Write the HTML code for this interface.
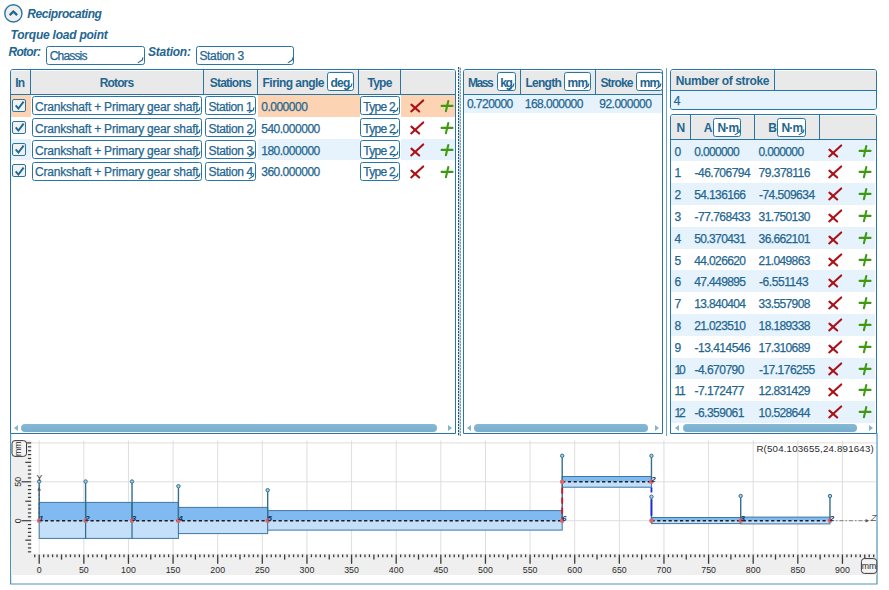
<!DOCTYPE html>
<html><head><meta charset="utf-8"><title>Reciprocating</title>
<style>
html,body{margin:0;padding:0;background:#fff;}
body{width:889px;height:590px;position:relative;overflow:hidden;font-family:"Liberation Sans",sans-serif;color:#1f6690;}
div,svg{position:absolute;box-sizing:border-box;}
.t{height:16px;line-height:16px;font-size:12px;white-space:nowrap;color:#1f6690;}
.t{-webkit-text-stroke:0.25px #1f6690;}
.bi{font-weight:bold;font-style:italic;-webkit-text-stroke:0;}
.hb{font-weight:bold;-webkit-text-stroke:0;}
.tbl{border:1.4px solid #2a76a3;border-radius:3px 3px 0 0;background:#fff;}
.hdr{background:#e9e9e9;border-radius:2px 2px 0 0;border-top:1px solid #f6fbfe;}
.vl{background:#2a76a3;}
.hl{background:#2a76a3;}
.cb{border:1.6px solid #2a76a3;border-radius:2.6px;background:#fff;}
.chk{width:13.8px;height:13px;border:1.3px solid #2a76a3;border-radius:2px;background:#f1f1f1;}
.split{background:#c2dcec;}
.spd1{width:1.4px !important;background-image:repeating-linear-gradient(to bottom,#24506e 0,#24506e 1.7px,transparent 1.7px,transparent 3px);}
.spd2{background-image:repeating-linear-gradient(to bottom,#8797a3 0,#8797a3 1.7px,transparent 1.7px,transparent 3px);}
.sbt{border-radius:4px;background:linear-gradient(to bottom,#86b8d5,#78aecd);}
svg text{font-family:"Liberation Sans",sans-serif;}
</style></head>
<body>
<svg class="ic" style="left:0px;top:0px" width="27" height="27" viewBox="0 0 27 27"><circle cx="13.4" cy="13.4" r="8.6" fill="#efefef" stroke="#2a76a3" stroke-width="1.4"/><path d="M9.7 15.1 L13.4 11.5 L17.1 15.1" fill="none" stroke="#1f6690" stroke-width="2.3"/></svg>
<div class="t bi" style="left:27.30px;top:6.00px;letter-spacing:-0.449px;">Reciprocating</div>
<div class="t bi" style="left:10.60px;top:26.80px;letter-spacing:-0.230px;">Torque load point</div>
<div class="t bi" style="left:8.40px;top:44.30px;letter-spacing:-0.678px;">Rotor:</div>
<div class="cb" style="left:46.4px;top:45.8px;width:98.30px;height:19.10px;"></div>
<svg class="ic" style="left:136.70px;top:54.90px" width="8" height="10" viewBox="-8 -10 8 10"><path d="M-2.1 -7.3 L-2.7 -5.0 L-6.8 -2.4" fill="none" stroke="#1f6690" stroke-width="1.1" stroke-linecap="round" stroke-linejoin="round"/></svg>
<div class="t" style="left:49.80px;top:48.30px;letter-spacing:-0.847px;">Chassis</div>
<div class="t bi" style="left:148.10px;top:44.30px;letter-spacing:-0.266px;">Station:</div>
<div class="cb" style="left:196.3px;top:45.8px;width:98.20px;height:19.10px;"></div>
<svg class="ic" style="left:286.50px;top:54.90px" width="8" height="10" viewBox="-8 -10 8 10"><path d="M-2.1 -7.3 L-2.7 -5.0 L-6.8 -2.4" fill="none" stroke="#1f6690" stroke-width="1.1" stroke-linecap="round" stroke-linejoin="round"/></svg>
<div class="t" style="left:199.40px;top:48.30px;letter-spacing:-0.337px;">Station 3</div>
<div class="tbl" style="left:10px;top:69.2px;width:445.8px;height:364.5px;"></div>
<div class="hdr" style="left:11px;top:70.2px;width:443.8px;height:24px;"></div>
<div class="vl" style="left:30px;top:70.2px;width:1px;height:24px;"></div>
<div class="vl" style="left:203px;top:70.2px;width:1px;height:24px;"></div>
<div class="vl" style="left:257px;top:70.2px;width:1px;height:24px;"></div>
<div class="vl" style="left:358px;top:70.2px;width:1px;height:24px;"></div>
<div class="vl" style="left:400px;top:70.2px;width:1px;height:24px;"></div>
<div class="hl" style="left:11px;top:93.6px;width:443.8px;height:1.1px;"></div>
<div class="row" style="left:11px;top:95.0px;width:20.2px;height:21.8px;background:#fcd4b4;"></div>
<div class="row" style="left:257.8px;top:95.0px;width:101.8px;height:21.8px;background:#fcd4b4;"></div>
<div class="row" style="left:401.4px;top:95.0px;width:53.4px;height:21.8px;background:#fcd4b4;"></div>
<div class="chk" style="left:12.3px;top:98.90px"></div>
<svg class="ic" style="left:12.6px;top:99.10px" width="13" height="13" viewBox="0 0 13 13"><path d="M2.7 6.4 L5.4 9.5 L10.6 2.7" fill="none" stroke="#1f6690" stroke-width="1.9"/></svg>
<div class="cb" style="left:32px;top:96.3px;width:170.30px;height:19.00px;"></div>
<svg class="ic" style="left:194.30px;top:105.30px" width="8" height="10" viewBox="-8 -10 8 10"><path d="M-2.1 -7.3 L-2.7 -5.0 L-6.8 -2.4" fill="none" stroke="#1f6690" stroke-width="1.1" stroke-linecap="round" stroke-linejoin="round"/></svg>
<div class="t" style="left:35.10px;top:98.90px;letter-spacing:-0.207px;">Crankshaft + Primary gear shaft</div>
<div class="cb" style="left:204.8px;top:96.3px;width:51.60px;height:19.00px;"></div>
<svg class="ic" style="left:248.40px;top:105.30px" width="8" height="10" viewBox="-8 -10 8 10"><path d="M-2.1 -7.3 L-2.7 -5.0 L-6.8 -2.4" fill="none" stroke="#1f6690" stroke-width="1.1" stroke-linecap="round" stroke-linejoin="round"/></svg>
<div class="t" style="left:208.50px;top:98.90px;letter-spacing:-0.412px;">Station 1</div>
<div class="t" style="left:261.20px;top:98.90px;letter-spacing:-0.482px;">0.000000</div>
<div class="cb" style="left:360.3px;top:96.3px;width:40.00px;height:19.00px;"></div>
<svg class="ic" style="left:392.30px;top:105.30px" width="8" height="10" viewBox="-8 -10 8 10"><path d="M-2.1 -7.3 L-2.7 -5.0 L-6.8 -2.4" fill="none" stroke="#1f6690" stroke-width="1.1" stroke-linecap="round" stroke-linejoin="round"/></svg>
<div class="t" style="left:363.20px;top:98.90px;letter-spacing:-0.710px;">Type 2</div>
<svg class="ic" style="left:409.10px;top:98.20px" width="16" height="16" viewBox="-8 -8 16 16"><path d="M-5.8 5.4 L6.2 -5.6" fill="none" stroke="#ab1118" stroke-width="2.1" stroke-linecap="round"/><path d="M-5.6 -1.4 L2.2 5.5" fill="none" stroke="#ab1118" stroke-width="2.1" stroke-linecap="round"/></svg>
<svg class="ic" style="left:438.90px;top:98.20px" width="16" height="16" viewBox="-8 -8 16 16"><path d="M-5.4 -0.1 L5.5 -0.1" fill="none" stroke="#3f9a12" stroke-width="2.1" stroke-linecap="round"/><path d="M1.3 -4.9 L-1.1 5.3" fill="none" stroke="#3f9a12" stroke-width="2.1" stroke-linecap="round"/></svg>
<div class="row" style="left:11px;top:116.8px;width:20.2px;height:21.8px;background:#fff;"></div>
<div class="row" style="left:257.8px;top:116.8px;width:101.8px;height:21.8px;background:#fff;"></div>
<div class="row" style="left:401.4px;top:116.8px;width:53.4px;height:21.8px;background:#fff;"></div>
<div class="chk" style="left:12.3px;top:120.70px"></div>
<svg class="ic" style="left:12.6px;top:120.90px" width="13" height="13" viewBox="0 0 13 13"><path d="M2.7 6.4 L5.4 9.5 L10.6 2.7" fill="none" stroke="#1f6690" stroke-width="1.9"/></svg>
<div class="cb" style="left:32px;top:118.1px;width:170.30px;height:19.00px;"></div>
<svg class="ic" style="left:194.30px;top:127.10px" width="8" height="10" viewBox="-8 -10 8 10"><path d="M-2.1 -7.3 L-2.7 -5.0 L-6.8 -2.4" fill="none" stroke="#1f6690" stroke-width="1.1" stroke-linecap="round" stroke-linejoin="round"/></svg>
<div class="t" style="left:35.10px;top:120.70px;letter-spacing:-0.207px;">Crankshaft + Primary gear shaft</div>
<div class="cb" style="left:204.8px;top:118.1px;width:51.60px;height:19.00px;"></div>
<svg class="ic" style="left:248.40px;top:127.10px" width="8" height="10" viewBox="-8 -10 8 10"><path d="M-2.1 -7.3 L-2.7 -5.0 L-6.8 -2.4" fill="none" stroke="#1f6690" stroke-width="1.1" stroke-linecap="round" stroke-linejoin="round"/></svg>
<div class="t" style="left:208.50px;top:120.70px;letter-spacing:-0.324px;">Station 2</div>
<div class="t" style="left:261.20px;top:120.70px;letter-spacing:-0.481px;">540.000000</div>
<div class="cb" style="left:360.3px;top:118.1px;width:40.00px;height:19.00px;"></div>
<svg class="ic" style="left:392.30px;top:127.10px" width="8" height="10" viewBox="-8 -10 8 10"><path d="M-2.1 -7.3 L-2.7 -5.0 L-6.8 -2.4" fill="none" stroke="#1f6690" stroke-width="1.1" stroke-linecap="round" stroke-linejoin="round"/></svg>
<div class="t" style="left:363.20px;top:120.70px;letter-spacing:-0.710px;">Type 2</div>
<svg class="ic" style="left:409.10px;top:120.00px" width="16" height="16" viewBox="-8 -8 16 16"><path d="M-5.8 5.4 L6.2 -5.6" fill="none" stroke="#ab1118" stroke-width="2.1" stroke-linecap="round"/><path d="M-5.6 -1.4 L2.2 5.5" fill="none" stroke="#ab1118" stroke-width="2.1" stroke-linecap="round"/></svg>
<svg class="ic" style="left:438.90px;top:120.00px" width="16" height="16" viewBox="-8 -8 16 16"><path d="M-5.4 -0.1 L5.5 -0.1" fill="none" stroke="#3f9a12" stroke-width="2.1" stroke-linecap="round"/><path d="M1.3 -4.9 L-1.1 5.3" fill="none" stroke="#3f9a12" stroke-width="2.1" stroke-linecap="round"/></svg>
<div class="row" style="left:11px;top:138.6px;width:20.2px;height:21.8px;background:#e6f2fc;"></div>
<div class="row" style="left:257.8px;top:138.6px;width:101.8px;height:21.8px;background:#e6f2fc;"></div>
<div class="row" style="left:401.4px;top:138.6px;width:53.4px;height:21.8px;background:#e6f2fc;"></div>
<div class="chk" style="left:12.3px;top:142.50px"></div>
<svg class="ic" style="left:12.6px;top:142.70px" width="13" height="13" viewBox="0 0 13 13"><path d="M2.7 6.4 L5.4 9.5 L10.6 2.7" fill="none" stroke="#1f6690" stroke-width="1.9"/></svg>
<div class="cb" style="left:32px;top:139.9px;width:170.30px;height:19.00px;"></div>
<svg class="ic" style="left:194.30px;top:148.90px" width="8" height="10" viewBox="-8 -10 8 10"><path d="M-2.1 -7.3 L-2.7 -5.0 L-6.8 -2.4" fill="none" stroke="#1f6690" stroke-width="1.1" stroke-linecap="round" stroke-linejoin="round"/></svg>
<div class="t" style="left:35.10px;top:142.50px;letter-spacing:-0.207px;">Crankshaft + Primary gear shaft</div>
<div class="cb" style="left:204.8px;top:139.9px;width:51.60px;height:19.00px;"></div>
<svg class="ic" style="left:248.40px;top:148.90px" width="8" height="10" viewBox="-8 -10 8 10"><path d="M-2.1 -7.3 L-2.7 -5.0 L-6.8 -2.4" fill="none" stroke="#1f6690" stroke-width="1.1" stroke-linecap="round" stroke-linejoin="round"/></svg>
<div class="t" style="left:208.50px;top:142.50px;letter-spacing:-0.324px;">Station 3</div>
<div class="t" style="left:261.20px;top:142.50px;letter-spacing:-0.481px;">180.000000</div>
<div class="cb" style="left:360.3px;top:139.9px;width:40.00px;height:19.00px;"></div>
<svg class="ic" style="left:392.30px;top:148.90px" width="8" height="10" viewBox="-8 -10 8 10"><path d="M-2.1 -7.3 L-2.7 -5.0 L-6.8 -2.4" fill="none" stroke="#1f6690" stroke-width="1.1" stroke-linecap="round" stroke-linejoin="round"/></svg>
<div class="t" style="left:363.20px;top:142.50px;letter-spacing:-0.710px;">Type 2</div>
<svg class="ic" style="left:409.10px;top:141.80px" width="16" height="16" viewBox="-8 -8 16 16"><path d="M-5.8 5.4 L6.2 -5.6" fill="none" stroke="#ab1118" stroke-width="2.1" stroke-linecap="round"/><path d="M-5.6 -1.4 L2.2 5.5" fill="none" stroke="#ab1118" stroke-width="2.1" stroke-linecap="round"/></svg>
<svg class="ic" style="left:438.90px;top:141.80px" width="16" height="16" viewBox="-8 -8 16 16"><path d="M-5.4 -0.1 L5.5 -0.1" fill="none" stroke="#3f9a12" stroke-width="2.1" stroke-linecap="round"/><path d="M1.3 -4.9 L-1.1 5.3" fill="none" stroke="#3f9a12" stroke-width="2.1" stroke-linecap="round"/></svg>
<div class="row" style="left:11px;top:160.39999999999998px;width:20.2px;height:21.8px;background:#fff;"></div>
<div class="row" style="left:257.8px;top:160.39999999999998px;width:101.8px;height:21.8px;background:#fff;"></div>
<div class="row" style="left:401.4px;top:160.39999999999998px;width:53.4px;height:21.8px;background:#fff;"></div>
<div class="chk" style="left:12.3px;top:164.30px"></div>
<svg class="ic" style="left:12.6px;top:164.50px" width="13" height="13" viewBox="0 0 13 13"><path d="M2.7 6.4 L5.4 9.5 L10.6 2.7" fill="none" stroke="#1f6690" stroke-width="1.9"/></svg>
<div class="cb" style="left:32px;top:161.7px;width:170.30px;height:19.00px;"></div>
<svg class="ic" style="left:194.30px;top:170.70px" width="8" height="10" viewBox="-8 -10 8 10"><path d="M-2.1 -7.3 L-2.7 -5.0 L-6.8 -2.4" fill="none" stroke="#1f6690" stroke-width="1.1" stroke-linecap="round" stroke-linejoin="round"/></svg>
<div class="t" style="left:35.10px;top:164.30px;letter-spacing:-0.207px;">Crankshaft + Primary gear shaft</div>
<div class="cb" style="left:204.8px;top:161.7px;width:51.60px;height:19.00px;"></div>
<svg class="ic" style="left:248.40px;top:170.70px" width="8" height="10" viewBox="-8 -10 8 10"><path d="M-2.1 -7.3 L-2.7 -5.0 L-6.8 -2.4" fill="none" stroke="#1f6690" stroke-width="1.1" stroke-linecap="round" stroke-linejoin="round"/></svg>
<div class="t" style="left:208.50px;top:164.30px;letter-spacing:-0.324px;">Station 4</div>
<div class="t" style="left:261.20px;top:164.30px;letter-spacing:-0.481px;">360.000000</div>
<div class="cb" style="left:360.3px;top:161.7px;width:40.00px;height:19.00px;"></div>
<svg class="ic" style="left:392.30px;top:170.70px" width="8" height="10" viewBox="-8 -10 8 10"><path d="M-2.1 -7.3 L-2.7 -5.0 L-6.8 -2.4" fill="none" stroke="#1f6690" stroke-width="1.1" stroke-linecap="round" stroke-linejoin="round"/></svg>
<div class="t" style="left:363.20px;top:164.30px;letter-spacing:-0.710px;">Type 2</div>
<svg class="ic" style="left:409.10px;top:163.60px" width="16" height="16" viewBox="-8 -8 16 16"><path d="M-5.8 5.4 L6.2 -5.6" fill="none" stroke="#ab1118" stroke-width="2.1" stroke-linecap="round"/><path d="M-5.6 -1.4 L2.2 5.5" fill="none" stroke="#ab1118" stroke-width="2.1" stroke-linecap="round"/></svg>
<svg class="ic" style="left:438.90px;top:163.60px" width="16" height="16" viewBox="-8 -8 16 16"><path d="M-5.4 -0.1 L5.5 -0.1" fill="none" stroke="#3f9a12" stroke-width="2.1" stroke-linecap="round"/><path d="M1.3 -4.9 L-1.1 5.3" fill="none" stroke="#3f9a12" stroke-width="2.1" stroke-linecap="round"/></svg>
<div class="t hb" style="left:15.30px;top:75.10px;letter-spacing:-0.834px;">In</div>
<div class="t hb" style="left:99.80px;top:75.10px;letter-spacing:-0.878px;">Rotors</div>
<div class="t hb" style="left:209.70px;top:75.10px;letter-spacing:-0.766px;">Stations</div>
<div class="t hb" style="left:262.60px;top:75.10px;letter-spacing:-0.557px;">Firing angle</div>
<div class="cb" style="left:327px;top:72.4px;width:26.60px;height:19.00px;"></div>
<svg class="ic" style="left:345.60px;top:81.40px" width="8" height="10" viewBox="-8 -10 8 10"><path d="M-2.1 -7.3 L-2.7 -5.0 L-6.8 -2.4" fill="none" stroke="#1f6690" stroke-width="1.1" stroke-linecap="round" stroke-linejoin="round"/></svg>
<div class="t hb" style="left:330.60px;top:74.80px;letter-spacing:-0.802px;">deg</div>
<div class="t hb" style="left:367.50px;top:75.10px;letter-spacing:-0.748px;">Type</div>
<div class="sbt" style="left:21px;top:424.0px;width:415.5px;height:7.9px"></div>
<svg class="ic" style="left:12px;top:424px" width="8" height="8"><path d="M6 1 L2 4 L6 7 Z" fill="#7fb4d2"/></svg>
<svg class="ic" style="left:446px;top:424px" width="8" height="8"><path d="M2 1 L6 4 L2 7 Z" fill="#7fb4d2"/></svg>
<div class="split" style="left:457.5px;top:67.2px;width:3.6px;height:368.6px;"></div>
<div class="spd1" style="left:458.0px;top:67.2px;width:1.6px;height:368.6px;"></div>
<div class="spd2" style="left:459.8px;top:67.6px;width:1.1px;height:368.2px;"></div>
<div class="tbl" style="left:463.2px;top:69.2px;width:200.2px;height:364.5px;"></div>
<div class="hdr" style="left:464.2px;top:70.2px;width:198.2px;height:24px;"></div>
<div class="vl" style="left:520px;top:70.2px;width:1px;height:24px;"></div>
<div class="vl" style="left:595px;top:70.2px;width:1px;height:24px;"></div>
<div class="hl" style="left:464.2px;top:93.6px;width:198.2px;height:1.1px;"></div>
<div class="row" style="left:464.2px;top:94.8px;width:198.2px;height:18.2px;background:#e6f2fc;"></div>
<div class="t hb" style="left:467.90px;top:75.10px;letter-spacing:-1.381px;">Mass</div>
<div class="cb" style="left:496.6px;top:72.4px;width:19.20px;height:19.00px;"></div>
<svg class="ic" style="left:507.80px;top:81.40px" width="8" height="10" viewBox="-8 -10 8 10"><path d="M-2.1 -7.3 L-2.7 -5.0 L-6.8 -2.4" fill="none" stroke="#1f6690" stroke-width="1.1" stroke-linecap="round" stroke-linejoin="round"/></svg>
<div class="t hb" style="left:500.20px;top:74.80px;letter-spacing:-1.474px;">kg</div>
<div class="t hb" style="left:525.50px;top:75.10px;letter-spacing:-0.752px;">Length</div>
<div class="cb" style="left:563.9px;top:72.4px;width:27.30px;height:19.00px;"></div>
<svg class="ic" style="left:583.20px;top:81.40px" width="8" height="10" viewBox="-8 -10 8 10"><path d="M-2.1 -7.3 L-2.7 -5.0 L-6.8 -2.4" fill="none" stroke="#1f6690" stroke-width="1.1" stroke-linecap="round" stroke-linejoin="round"/></svg>
<div class="t hb" style="left:567.60px;top:74.80px;letter-spacing:-0.870px;">mm</div>
<div class="t hb" style="left:600.50px;top:75.10px;letter-spacing:-0.895px;">Stroke</div>
<div class="clip" style="left:630px;top:70px;width:33.40px;height:24px;overflow:hidden">
<div class="cb" style="left:6.100000000000023px;top:2.4000000000000057px;width:27.20px;height:19.00px;"></div>
<svg class="ic" style="left:25.30px;top:11.40px" width="8" height="10" viewBox="-8 -10 8 10"><path d="M-2.1 -7.3 L-2.7 -5.0 L-6.8 -2.4" fill="none" stroke="#1f6690" stroke-width="1.1" stroke-linecap="round" stroke-linejoin="round"/></svg>
</div>
<div class="t hb" style="left:639.80px;top:74.80px;letter-spacing:-0.870px;">mm</div>
<div class="t" style="left:466.90px;top:96.40px;letter-spacing:-0.525px;">0.720000</div>
<div class="t" style="left:524.80px;top:96.40px;letter-spacing:-0.536px;">168.000000</div>
<div class="t" style="left:599.30px;top:96.40px;letter-spacing:-0.519px;">92.000000</div>
<div class="sbt" style="left:473.6px;top:424.0px;width:174.10000000000002px;height:7.9px"></div>
<svg class="ic" style="left:464.7px;top:424px" width="8" height="8"><path d="M6 1 L2 4 L6 7 Z" fill="#7fb4d2"/></svg>
<svg class="ic" style="left:653.2px;top:424px" width="8" height="8"><path d="M2 1 L6 4 L2 7 Z" fill="#7fb4d2"/></svg>
<div class="" style="left:665.7px;top:68px;width:1.6px;height:368px;background:#6fa3c2;"></div>
<div class="tbl" style="left:670.4px;top:69.3px;width:206.60000000000002px;height:40.6px;border-radius:3px;"></div>
<div class="hdr" style="left:671.4px;top:70.3px;width:204.60000000000002px;height:20px;"></div>
<div class="vl" style="left:774px;top:70.3px;width:1px;height:20px;"></div>
<div class="hl" style="left:671.4px;top:90px;width:204.60000000000002px;height:1.1px;"></div>
<div class="row" style="left:671.4px;top:91.1px;width:204.60000000000002px;height:17.8px;background:#e6f2fc;border-radius:0 0 2px 2px;"></div>
<div class="t hb" style="left:675.80px;top:73.00px;letter-spacing:-0.385px;">Number of stroke</div>
<div class="t" style="left:673.80px;top:92.60px;letter-spacing:0.000px;">4</div>
<div class="tbl" style="left:670.4px;top:114.3px;width:206.60000000000002px;height:319.4px;"></div>
<div class="hdr" style="left:671.4px;top:115.3px;width:204.60000000000002px;height:23.6px;"></div>
<div class="vl" style="left:690px;top:115.3px;width:1px;height:23.6px;"></div>
<div class="vl" style="left:754px;top:115.3px;width:1px;height:23.6px;"></div>
<div class="vl" style="left:819px;top:115.3px;width:1px;height:23.6px;"></div>
<div class="hl" style="left:671.4px;top:138.6px;width:204.60000000000002px;height:1.1px;"></div>
<div class="t hb" style="left:676.50px;top:119.70px;letter-spacing:0.000px;">N</div>
<div class="t hb" style="left:703.70px;top:119.70px;letter-spacing:0.000px;">A</div>
<div class="cb" style="left:713.2px;top:117.5px;width:28.30px;height:19.10px;"></div>
<svg class="ic" style="left:733.50px;top:126.60px" width="8" height="10" viewBox="-8 -10 8 10"><path d="M-2.1 -7.3 L-2.7 -5.0 L-6.8 -2.4" fill="none" stroke="#1f6690" stroke-width="1.1" stroke-linecap="round" stroke-linejoin="round"/></svg>
<div class="t hb" style="left:717.40px;top:119.50px;letter-spacing:-0.831px;">N·m</div>
<div class="t hb" style="left:768.20px;top:119.70px;letter-spacing:0.000px;">B</div>
<div class="cb" style="left:777.2px;top:117.5px;width:28.60px;height:19.10px;"></div>
<svg class="ic" style="left:797.80px;top:126.60px" width="8" height="10" viewBox="-8 -10 8 10"><path d="M-2.1 -7.3 L-2.7 -5.0 L-6.8 -2.4" fill="none" stroke="#1f6690" stroke-width="1.1" stroke-linecap="round" stroke-linejoin="round"/></svg>
<div class="t hb" style="left:781.40px;top:119.50px;letter-spacing:-0.831px;">N·m</div>
<div class="row" style="left:671.4px;top:139.6px;width:204.00000000000003px;height:21.85px;background:#e6f2fc;"></div>
<div class="t" style="left:674.40px;top:143.60px;letter-spacing:0.000px;">0</div>
<div class="t" style="left:694.20px;top:143.60px;letter-spacing:-0.656px;">0.000000</div>
<div class="t" style="left:758.60px;top:143.60px;letter-spacing:-0.656px;">0.000000</div>
<svg class="ic" style="left:827.40px;top:142.50px" width="16" height="16" viewBox="-8 -8 16 16"><path d="M-5.8 5.4 L6.2 -5.6" fill="none" stroke="#ab1118" stroke-width="2.1" stroke-linecap="round"/><path d="M-5.6 -1.4 L2.2 5.5" fill="none" stroke="#ab1118" stroke-width="2.1" stroke-linecap="round"/></svg>
<svg class="ic" style="left:857.00px;top:142.50px" width="16" height="16" viewBox="-8 -8 16 16"><path d="M-5.4 -0.1 L5.5 -0.1" fill="none" stroke="#3f9a12" stroke-width="2.1" stroke-linecap="round"/><path d="M1.3 -4.9 L-1.1 5.3" fill="none" stroke="#3f9a12" stroke-width="2.1" stroke-linecap="round"/></svg>
<div class="row" style="left:671.4px;top:161.4px;width:204.00000000000003px;height:21.85px;background:#fff;"></div>
<div class="t" style="left:674.40px;top:165.40px;letter-spacing:0.000px;">1</div>
<div class="t" style="left:694.50px;top:165.40px;letter-spacing:-0.504px;">-46.706794</div>
<div class="t" style="left:758.60px;top:165.40px;letter-spacing:-0.506px;">79.378116</div>
<svg class="ic" style="left:827.40px;top:164.30px" width="16" height="16" viewBox="-8 -8 16 16"><path d="M-5.8 5.4 L6.2 -5.6" fill="none" stroke="#ab1118" stroke-width="2.1" stroke-linecap="round"/><path d="M-5.6 -1.4 L2.2 5.5" fill="none" stroke="#ab1118" stroke-width="2.1" stroke-linecap="round"/></svg>
<svg class="ic" style="left:857.00px;top:164.30px" width="16" height="16" viewBox="-8 -8 16 16"><path d="M-5.4 -0.1 L5.5 -0.1" fill="none" stroke="#3f9a12" stroke-width="2.1" stroke-linecap="round"/><path d="M1.3 -4.9 L-1.1 5.3" fill="none" stroke="#3f9a12" stroke-width="2.1" stroke-linecap="round"/></svg>
<div class="row" style="left:671.4px;top:183.2px;width:204.00000000000003px;height:21.85px;background:#e6f2fc;"></div>
<div class="t" style="left:674.40px;top:187.20px;letter-spacing:0.000px;">2</div>
<div class="t" style="left:694.20px;top:187.20px;letter-spacing:-0.617px;">54.136166</div>
<div class="t" style="left:758.90px;top:187.20px;letter-spacing:-0.504px;">-74.509634</div>
<svg class="ic" style="left:827.40px;top:186.10px" width="16" height="16" viewBox="-8 -8 16 16"><path d="M-5.8 5.4 L6.2 -5.6" fill="none" stroke="#ab1118" stroke-width="2.1" stroke-linecap="round"/><path d="M-5.6 -1.4 L2.2 5.5" fill="none" stroke="#ab1118" stroke-width="2.1" stroke-linecap="round"/></svg>
<svg class="ic" style="left:857.00px;top:186.10px" width="16" height="16" viewBox="-8 -8 16 16"><path d="M-5.4 -0.1 L5.5 -0.1" fill="none" stroke="#3f9a12" stroke-width="2.1" stroke-linecap="round"/><path d="M1.3 -4.9 L-1.1 5.3" fill="none" stroke="#3f9a12" stroke-width="2.1" stroke-linecap="round"/></svg>
<div class="row" style="left:671.4px;top:205.0px;width:204.00000000000003px;height:21.85px;background:#fff;"></div>
<div class="t" style="left:674.40px;top:209.00px;letter-spacing:0.000px;">3</div>
<div class="t" style="left:694.50px;top:209.00px;letter-spacing:-0.504px;">-77.768433</div>
<div class="t" style="left:758.60px;top:209.00px;letter-spacing:-0.617px;">31.750130</div>
<svg class="ic" style="left:827.40px;top:207.90px" width="16" height="16" viewBox="-8 -8 16 16"><path d="M-5.8 5.4 L6.2 -5.6" fill="none" stroke="#ab1118" stroke-width="2.1" stroke-linecap="round"/><path d="M-5.6 -1.4 L2.2 5.5" fill="none" stroke="#ab1118" stroke-width="2.1" stroke-linecap="round"/></svg>
<svg class="ic" style="left:857.00px;top:207.90px" width="16" height="16" viewBox="-8 -8 16 16"><path d="M-5.4 -0.1 L5.5 -0.1" fill="none" stroke="#3f9a12" stroke-width="2.1" stroke-linecap="round"/><path d="M1.3 -4.9 L-1.1 5.3" fill="none" stroke="#3f9a12" stroke-width="2.1" stroke-linecap="round"/></svg>
<div class="row" style="left:671.4px;top:226.8px;width:204.00000000000003px;height:21.85px;background:#e6f2fc;"></div>
<div class="t" style="left:674.40px;top:230.80px;letter-spacing:0.000px;">4</div>
<div class="t" style="left:694.20px;top:230.80px;letter-spacing:-0.617px;">50.370431</div>
<div class="t" style="left:758.60px;top:230.80px;letter-spacing:-0.617px;">36.662101</div>
<svg class="ic" style="left:827.40px;top:229.70px" width="16" height="16" viewBox="-8 -8 16 16"><path d="M-5.8 5.4 L6.2 -5.6" fill="none" stroke="#ab1118" stroke-width="2.1" stroke-linecap="round"/><path d="M-5.6 -1.4 L2.2 5.5" fill="none" stroke="#ab1118" stroke-width="2.1" stroke-linecap="round"/></svg>
<svg class="ic" style="left:857.00px;top:229.70px" width="16" height="16" viewBox="-8 -8 16 16"><path d="M-5.4 -0.1 L5.5 -0.1" fill="none" stroke="#3f9a12" stroke-width="2.1" stroke-linecap="round"/><path d="M1.3 -4.9 L-1.1 5.3" fill="none" stroke="#3f9a12" stroke-width="2.1" stroke-linecap="round"/></svg>
<div class="row" style="left:671.4px;top:248.6px;width:204.00000000000003px;height:21.85px;background:#fff;"></div>
<div class="t" style="left:674.40px;top:252.60px;letter-spacing:0.000px;">5</div>
<div class="t" style="left:694.20px;top:252.60px;letter-spacing:-0.617px;">44.026620</div>
<div class="t" style="left:758.60px;top:252.60px;letter-spacing:-0.617px;">21.049863</div>
<svg class="ic" style="left:827.40px;top:251.50px" width="16" height="16" viewBox="-8 -8 16 16"><path d="M-5.8 5.4 L6.2 -5.6" fill="none" stroke="#ab1118" stroke-width="2.1" stroke-linecap="round"/><path d="M-5.6 -1.4 L2.2 5.5" fill="none" stroke="#ab1118" stroke-width="2.1" stroke-linecap="round"/></svg>
<svg class="ic" style="left:857.00px;top:251.50px" width="16" height="16" viewBox="-8 -8 16 16"><path d="M-5.4 -0.1 L5.5 -0.1" fill="none" stroke="#3f9a12" stroke-width="2.1" stroke-linecap="round"/><path d="M1.3 -4.9 L-1.1 5.3" fill="none" stroke="#3f9a12" stroke-width="2.1" stroke-linecap="round"/></svg>
<div class="row" style="left:671.4px;top:270.4px;width:204.00000000000003px;height:21.85px;background:#e6f2fc;"></div>
<div class="t" style="left:674.40px;top:274.40px;letter-spacing:0.000px;">6</div>
<div class="t" style="left:694.20px;top:274.40px;letter-spacing:-0.617px;">47.449895</div>
<div class="t" style="left:758.90px;top:274.40px;letter-spacing:-0.413px;">-6.551143</div>
<svg class="ic" style="left:827.40px;top:273.30px" width="16" height="16" viewBox="-8 -8 16 16"><path d="M-5.8 5.4 L6.2 -5.6" fill="none" stroke="#ab1118" stroke-width="2.1" stroke-linecap="round"/><path d="M-5.6 -1.4 L2.2 5.5" fill="none" stroke="#ab1118" stroke-width="2.1" stroke-linecap="round"/></svg>
<svg class="ic" style="left:857.00px;top:273.30px" width="16" height="16" viewBox="-8 -8 16 16"><path d="M-5.4 -0.1 L5.5 -0.1" fill="none" stroke="#3f9a12" stroke-width="2.1" stroke-linecap="round"/><path d="M1.3 -4.9 L-1.1 5.3" fill="none" stroke="#3f9a12" stroke-width="2.1" stroke-linecap="round"/></svg>
<div class="row" style="left:671.4px;top:292.2px;width:204.00000000000003px;height:21.85px;background:#fff;"></div>
<div class="t" style="left:674.40px;top:296.20px;letter-spacing:0.000px;">7</div>
<div class="t" style="left:694.20px;top:296.20px;letter-spacing:-0.617px;">13.840404</div>
<div class="t" style="left:758.60px;top:296.20px;letter-spacing:-0.617px;">33.557908</div>
<svg class="ic" style="left:827.40px;top:295.10px" width="16" height="16" viewBox="-8 -8 16 16"><path d="M-5.8 5.4 L6.2 -5.6" fill="none" stroke="#ab1118" stroke-width="2.1" stroke-linecap="round"/><path d="M-5.6 -1.4 L2.2 5.5" fill="none" stroke="#ab1118" stroke-width="2.1" stroke-linecap="round"/></svg>
<svg class="ic" style="left:857.00px;top:295.10px" width="16" height="16" viewBox="-8 -8 16 16"><path d="M-5.4 -0.1 L5.5 -0.1" fill="none" stroke="#3f9a12" stroke-width="2.1" stroke-linecap="round"/><path d="M1.3 -4.9 L-1.1 5.3" fill="none" stroke="#3f9a12" stroke-width="2.1" stroke-linecap="round"/></svg>
<div class="row" style="left:671.4px;top:314.0px;width:204.00000000000003px;height:21.85px;background:#e6f2fc;"></div>
<div class="t" style="left:674.40px;top:318.00px;letter-spacing:0.000px;">8</div>
<div class="t" style="left:694.20px;top:318.00px;letter-spacing:-0.617px;">21.023510</div>
<div class="t" style="left:758.60px;top:318.00px;letter-spacing:-0.617px;">18.189338</div>
<svg class="ic" style="left:827.40px;top:316.90px" width="16" height="16" viewBox="-8 -8 16 16"><path d="M-5.8 5.4 L6.2 -5.6" fill="none" stroke="#ab1118" stroke-width="2.1" stroke-linecap="round"/><path d="M-5.6 -1.4 L2.2 5.5" fill="none" stroke="#ab1118" stroke-width="2.1" stroke-linecap="round"/></svg>
<svg class="ic" style="left:857.00px;top:316.90px" width="16" height="16" viewBox="-8 -8 16 16"><path d="M-5.4 -0.1 L5.5 -0.1" fill="none" stroke="#3f9a12" stroke-width="2.1" stroke-linecap="round"/><path d="M1.3 -4.9 L-1.1 5.3" fill="none" stroke="#3f9a12" stroke-width="2.1" stroke-linecap="round"/></svg>
<div class="row" style="left:671.4px;top:335.8px;width:204.00000000000003px;height:21.85px;background:#fff;"></div>
<div class="t" style="left:674.40px;top:339.80px;letter-spacing:0.000px;">9</div>
<div class="t" style="left:694.50px;top:339.80px;letter-spacing:-0.504px;">-13.414546</div>
<div class="t" style="left:758.60px;top:339.80px;letter-spacing:-0.617px;">17.310689</div>
<svg class="ic" style="left:827.40px;top:338.70px" width="16" height="16" viewBox="-8 -8 16 16"><path d="M-5.8 5.4 L6.2 -5.6" fill="none" stroke="#ab1118" stroke-width="2.1" stroke-linecap="round"/><path d="M-5.6 -1.4 L2.2 5.5" fill="none" stroke="#ab1118" stroke-width="2.1" stroke-linecap="round"/></svg>
<svg class="ic" style="left:857.00px;top:338.70px" width="16" height="16" viewBox="-8 -8 16 16"><path d="M-5.4 -0.1 L5.5 -0.1" fill="none" stroke="#3f9a12" stroke-width="2.1" stroke-linecap="round"/><path d="M1.3 -4.9 L-1.1 5.3" fill="none" stroke="#3f9a12" stroke-width="2.1" stroke-linecap="round"/></svg>
<div class="row" style="left:671.4px;top:357.6px;width:204.00000000000003px;height:21.85px;background:#e6f2fc;"></div>
<div class="t" style="left:674.40px;top:361.60px;letter-spacing:-2.069px;">10</div>
<div class="t" style="left:694.50px;top:361.60px;letter-spacing:-0.524px;">-4.670790</div>
<div class="t" style="left:758.90px;top:361.60px;letter-spacing:-0.504px;">-17.176255</div>
<svg class="ic" style="left:827.40px;top:360.50px" width="16" height="16" viewBox="-8 -8 16 16"><path d="M-5.8 5.4 L6.2 -5.6" fill="none" stroke="#ab1118" stroke-width="2.1" stroke-linecap="round"/><path d="M-5.6 -1.4 L2.2 5.5" fill="none" stroke="#ab1118" stroke-width="2.1" stroke-linecap="round"/></svg>
<svg class="ic" style="left:857.00px;top:360.50px" width="16" height="16" viewBox="-8 -8 16 16"><path d="M-5.4 -0.1 L5.5 -0.1" fill="none" stroke="#3f9a12" stroke-width="2.1" stroke-linecap="round"/><path d="M1.3 -4.9 L-1.1 5.3" fill="none" stroke="#3f9a12" stroke-width="2.1" stroke-linecap="round"/></svg>
<div class="row" style="left:671.4px;top:379.4px;width:204.00000000000003px;height:21.85px;background:#fff;"></div>
<div class="t" style="left:674.40px;top:383.40px;letter-spacing:-1.178px;">11</div>
<div class="t" style="left:694.50px;top:383.40px;letter-spacing:-0.524px;">-7.172477</div>
<div class="t" style="left:758.60px;top:383.40px;letter-spacing:-0.617px;">12.831429</div>
<svg class="ic" style="left:827.40px;top:382.30px" width="16" height="16" viewBox="-8 -8 16 16"><path d="M-5.8 5.4 L6.2 -5.6" fill="none" stroke="#ab1118" stroke-width="2.1" stroke-linecap="round"/><path d="M-5.6 -1.4 L2.2 5.5" fill="none" stroke="#ab1118" stroke-width="2.1" stroke-linecap="round"/></svg>
<svg class="ic" style="left:857.00px;top:382.30px" width="16" height="16" viewBox="-8 -8 16 16"><path d="M-5.4 -0.1 L5.5 -0.1" fill="none" stroke="#3f9a12" stroke-width="2.1" stroke-linecap="round"/><path d="M1.3 -4.9 L-1.1 5.3" fill="none" stroke="#3f9a12" stroke-width="2.1" stroke-linecap="round"/></svg>
<div class="row" style="left:671.4px;top:401.20000000000005px;width:204.00000000000003px;height:21.85px;background:#e6f2fc;"></div>
<div class="t" style="left:674.40px;top:405.20px;letter-spacing:-2.069px;">12</div>
<div class="t" style="left:694.50px;top:405.20px;letter-spacing:-0.524px;">-6.359061</div>
<div class="t" style="left:758.60px;top:405.20px;letter-spacing:-0.617px;">10.528644</div>
<svg class="ic" style="left:827.40px;top:404.10px" width="16" height="16" viewBox="-8 -8 16 16"><path d="M-5.8 5.4 L6.2 -5.6" fill="none" stroke="#ab1118" stroke-width="2.1" stroke-linecap="round"/><path d="M-5.6 -1.4 L2.2 5.5" fill="none" stroke="#ab1118" stroke-width="2.1" stroke-linecap="round"/></svg>
<svg class="ic" style="left:857.00px;top:404.10px" width="16" height="16" viewBox="-8 -8 16 16"><path d="M-5.4 -0.1 L5.5 -0.1" fill="none" stroke="#3f9a12" stroke-width="2.1" stroke-linecap="round"/><path d="M1.3 -4.9 L-1.1 5.3" fill="none" stroke="#3f9a12" stroke-width="2.1" stroke-linecap="round"/></svg>
<div class="sbt" style="left:683px;top:424.0px;width:174px;height:7.9px"></div>
<svg class="ic" style="left:672.5px;top:424px" width="8" height="8"><path d="M6 1 L2 4 L6 7 Z" fill="#7fb4d2"/></svg>
<svg class="ic" style="left:867px;top:424px" width="8" height="8"><path d="M2 1 L6 4 L2 7 Z" fill="#7fb4d2"/></svg>
<svg class="ic" style="left:0;top:430px" width="889" height="160" viewBox="0 430 889 160">
<path d="M10.6 433 L10.6 584 L877 584 L877 433" fill="none" stroke="#4f93b9" stroke-width="1.2"/>
<rect x="11.2" y="440.2" width="20" height="134.8" fill="#efefef"/>
<rect x="11.2" y="553.6" width="865.2" height="21.4" fill="#efefef"/>
<line x1="39.20" y1="440.4" x2="39.20" y2="553.6" stroke="#dedede" stroke-width="1"/>
<line x1="83.83" y1="440.4" x2="83.83" y2="553.6" stroke="#dedede" stroke-width="1"/>
<line x1="128.45" y1="440.4" x2="128.45" y2="553.6" stroke="#dedede" stroke-width="1"/>
<line x1="173.07" y1="440.4" x2="173.07" y2="553.6" stroke="#dedede" stroke-width="1"/>
<line x1="217.70" y1="440.4" x2="217.70" y2="553.6" stroke="#dedede" stroke-width="1"/>
<line x1="262.32" y1="440.4" x2="262.32" y2="553.6" stroke="#dedede" stroke-width="1"/>
<line x1="306.95" y1="440.4" x2="306.95" y2="553.6" stroke="#dedede" stroke-width="1"/>
<line x1="351.57" y1="440.4" x2="351.57" y2="553.6" stroke="#dedede" stroke-width="1"/>
<line x1="396.20" y1="440.4" x2="396.20" y2="553.6" stroke="#dedede" stroke-width="1"/>
<line x1="440.82" y1="440.4" x2="440.82" y2="553.6" stroke="#dedede" stroke-width="1"/>
<line x1="485.45" y1="440.4" x2="485.45" y2="553.6" stroke="#dedede" stroke-width="1"/>
<line x1="530.08" y1="440.4" x2="530.08" y2="553.6" stroke="#dedede" stroke-width="1"/>
<line x1="574.70" y1="440.4" x2="574.70" y2="553.6" stroke="#dedede" stroke-width="1"/>
<line x1="619.33" y1="440.4" x2="619.33" y2="553.6" stroke="#dedede" stroke-width="1"/>
<line x1="663.95" y1="440.4" x2="663.95" y2="553.6" stroke="#dedede" stroke-width="1"/>
<line x1="708.58" y1="440.4" x2="708.58" y2="553.6" stroke="#dedede" stroke-width="1"/>
<line x1="753.20" y1="440.4" x2="753.20" y2="553.6" stroke="#dedede" stroke-width="1"/>
<line x1="797.83" y1="440.4" x2="797.83" y2="553.6" stroke="#dedede" stroke-width="1"/>
<line x1="842.45" y1="440.4" x2="842.45" y2="553.6" stroke="#dedede" stroke-width="1"/>
<line x1="31.2" y1="520.70" x2="876.4" y2="520.70" stroke="#dedede" stroke-width="1"/>
<line x1="31.2" y1="481.80" x2="876.4" y2="481.80" stroke="#dedede" stroke-width="1"/>
<line x1="31.2" y1="442.90" x2="876.4" y2="442.90" stroke="#dedede" stroke-width="1"/>
<line x1="27.9" y1="551.82" x2="31.2" y2="551.82" stroke="#3a3a3a" stroke-width="1.2"/>
<line x1="27.9" y1="547.93" x2="31.2" y2="547.93" stroke="#3a3a3a" stroke-width="1.2"/>
<line x1="27.9" y1="544.04" x2="31.2" y2="544.04" stroke="#3a3a3a" stroke-width="1.2"/>
<line x1="25.3" y1="540.15" x2="31.2" y2="540.15" stroke="#3a3a3a" stroke-width="1.2"/>
<line x1="27.9" y1="536.26" x2="31.2" y2="536.26" stroke="#3a3a3a" stroke-width="1.2"/>
<line x1="27.9" y1="532.37" x2="31.2" y2="532.37" stroke="#3a3a3a" stroke-width="1.2"/>
<line x1="27.9" y1="528.48" x2="31.2" y2="528.48" stroke="#3a3a3a" stroke-width="1.2"/>
<line x1="27.9" y1="524.59" x2="31.2" y2="524.59" stroke="#3a3a3a" stroke-width="1.2"/>
<line x1="21.5" y1="520.70" x2="31.2" y2="520.70" stroke="#3a3a3a" stroke-width="1.2"/>
<line x1="27.9" y1="516.81" x2="31.2" y2="516.81" stroke="#3a3a3a" stroke-width="1.2"/>
<line x1="27.9" y1="512.92" x2="31.2" y2="512.92" stroke="#3a3a3a" stroke-width="1.2"/>
<line x1="27.9" y1="509.03" x2="31.2" y2="509.03" stroke="#3a3a3a" stroke-width="1.2"/>
<line x1="27.9" y1="505.14" x2="31.2" y2="505.14" stroke="#3a3a3a" stroke-width="1.2"/>
<line x1="25.3" y1="501.25" x2="31.2" y2="501.25" stroke="#3a3a3a" stroke-width="1.2"/>
<line x1="27.9" y1="497.36" x2="31.2" y2="497.36" stroke="#3a3a3a" stroke-width="1.2"/>
<line x1="27.9" y1="493.47" x2="31.2" y2="493.47" stroke="#3a3a3a" stroke-width="1.2"/>
<line x1="27.9" y1="489.58" x2="31.2" y2="489.58" stroke="#3a3a3a" stroke-width="1.2"/>
<line x1="27.9" y1="485.69" x2="31.2" y2="485.69" stroke="#3a3a3a" stroke-width="1.2"/>
<line x1="21.5" y1="481.80" x2="31.2" y2="481.80" stroke="#3a3a3a" stroke-width="1.2"/>
<line x1="27.9" y1="477.91" x2="31.2" y2="477.91" stroke="#3a3a3a" stroke-width="1.2"/>
<line x1="27.9" y1="474.02" x2="31.2" y2="474.02" stroke="#3a3a3a" stroke-width="1.2"/>
<line x1="27.9" y1="470.13" x2="31.2" y2="470.13" stroke="#3a3a3a" stroke-width="1.2"/>
<line x1="27.9" y1="466.24" x2="31.2" y2="466.24" stroke="#3a3a3a" stroke-width="1.2"/>
<line x1="25.3" y1="462.35" x2="31.2" y2="462.35" stroke="#3a3a3a" stroke-width="1.2"/>
<line x1="27.9" y1="458.46" x2="31.2" y2="458.46" stroke="#3a3a3a" stroke-width="1.2"/>
<line x1="27.9" y1="454.57" x2="31.2" y2="454.57" stroke="#3a3a3a" stroke-width="1.2"/>
<line x1="27.9" y1="450.68" x2="31.2" y2="450.68" stroke="#3a3a3a" stroke-width="1.2"/>
<line x1="27.9" y1="446.79" x2="31.2" y2="446.79" stroke="#3a3a3a" stroke-width="1.2"/>
<line x1="21.5" y1="442.90" x2="31.2" y2="442.90" stroke="#3a3a3a" stroke-width="1.2"/>
<line x1="34.74" y1="554.4" x2="34.74" y2="557.2" stroke="#3a3a3a" stroke-width="1.3"/>
<line x1="39.20" y1="554.4" x2="39.20" y2="563.8" stroke="#3a3a3a" stroke-width="1.3"/>
<line x1="43.66" y1="554.4" x2="43.66" y2="557.2" stroke="#3a3a3a" stroke-width="1.3"/>
<line x1="48.12" y1="554.4" x2="48.12" y2="557.2" stroke="#3a3a3a" stroke-width="1.3"/>
<line x1="52.59" y1="554.4" x2="52.59" y2="557.2" stroke="#3a3a3a" stroke-width="1.3"/>
<line x1="57.05" y1="554.4" x2="57.05" y2="557.2" stroke="#3a3a3a" stroke-width="1.3"/>
<line x1="61.51" y1="554.4" x2="61.51" y2="559.6" stroke="#3a3a3a" stroke-width="1.3"/>
<line x1="65.97" y1="554.4" x2="65.97" y2="557.2" stroke="#3a3a3a" stroke-width="1.3"/>
<line x1="70.44" y1="554.4" x2="70.44" y2="557.2" stroke="#3a3a3a" stroke-width="1.3"/>
<line x1="74.90" y1="554.4" x2="74.90" y2="557.2" stroke="#3a3a3a" stroke-width="1.3"/>
<line x1="79.36" y1="554.4" x2="79.36" y2="557.2" stroke="#3a3a3a" stroke-width="1.3"/>
<line x1="83.83" y1="554.4" x2="83.83" y2="563.8" stroke="#3a3a3a" stroke-width="1.3"/>
<line x1="88.29" y1="554.4" x2="88.29" y2="557.2" stroke="#3a3a3a" stroke-width="1.3"/>
<line x1="92.75" y1="554.4" x2="92.75" y2="557.2" stroke="#3a3a3a" stroke-width="1.3"/>
<line x1="97.21" y1="554.4" x2="97.21" y2="557.2" stroke="#3a3a3a" stroke-width="1.3"/>
<line x1="101.67" y1="554.4" x2="101.67" y2="557.2" stroke="#3a3a3a" stroke-width="1.3"/>
<line x1="106.14" y1="554.4" x2="106.14" y2="559.6" stroke="#3a3a3a" stroke-width="1.3"/>
<line x1="110.60" y1="554.4" x2="110.60" y2="557.2" stroke="#3a3a3a" stroke-width="1.3"/>
<line x1="115.06" y1="554.4" x2="115.06" y2="557.2" stroke="#3a3a3a" stroke-width="1.3"/>
<line x1="119.53" y1="554.4" x2="119.53" y2="557.2" stroke="#3a3a3a" stroke-width="1.3"/>
<line x1="123.99" y1="554.4" x2="123.99" y2="557.2" stroke="#3a3a3a" stroke-width="1.3"/>
<line x1="128.45" y1="554.4" x2="128.45" y2="563.8" stroke="#3a3a3a" stroke-width="1.3"/>
<line x1="132.91" y1="554.4" x2="132.91" y2="557.2" stroke="#3a3a3a" stroke-width="1.3"/>
<line x1="137.38" y1="554.4" x2="137.38" y2="557.2" stroke="#3a3a3a" stroke-width="1.3"/>
<line x1="141.84" y1="554.4" x2="141.84" y2="557.2" stroke="#3a3a3a" stroke-width="1.3"/>
<line x1="146.30" y1="554.4" x2="146.30" y2="557.2" stroke="#3a3a3a" stroke-width="1.3"/>
<line x1="150.76" y1="554.4" x2="150.76" y2="559.6" stroke="#3a3a3a" stroke-width="1.3"/>
<line x1="155.22" y1="554.4" x2="155.22" y2="557.2" stroke="#3a3a3a" stroke-width="1.3"/>
<line x1="159.69" y1="554.4" x2="159.69" y2="557.2" stroke="#3a3a3a" stroke-width="1.3"/>
<line x1="164.15" y1="554.4" x2="164.15" y2="557.2" stroke="#3a3a3a" stroke-width="1.3"/>
<line x1="168.61" y1="554.4" x2="168.61" y2="557.2" stroke="#3a3a3a" stroke-width="1.3"/>
<line x1="173.07" y1="554.4" x2="173.07" y2="563.8" stroke="#3a3a3a" stroke-width="1.3"/>
<line x1="177.54" y1="554.4" x2="177.54" y2="557.2" stroke="#3a3a3a" stroke-width="1.3"/>
<line x1="182.00" y1="554.4" x2="182.00" y2="557.2" stroke="#3a3a3a" stroke-width="1.3"/>
<line x1="186.46" y1="554.4" x2="186.46" y2="557.2" stroke="#3a3a3a" stroke-width="1.3"/>
<line x1="190.93" y1="554.4" x2="190.93" y2="557.2" stroke="#3a3a3a" stroke-width="1.3"/>
<line x1="195.39" y1="554.4" x2="195.39" y2="559.6" stroke="#3a3a3a" stroke-width="1.3"/>
<line x1="199.85" y1="554.4" x2="199.85" y2="557.2" stroke="#3a3a3a" stroke-width="1.3"/>
<line x1="204.31" y1="554.4" x2="204.31" y2="557.2" stroke="#3a3a3a" stroke-width="1.3"/>
<line x1="208.77" y1="554.4" x2="208.77" y2="557.2" stroke="#3a3a3a" stroke-width="1.3"/>
<line x1="213.24" y1="554.4" x2="213.24" y2="557.2" stroke="#3a3a3a" stroke-width="1.3"/>
<line x1="217.70" y1="554.4" x2="217.70" y2="563.8" stroke="#3a3a3a" stroke-width="1.3"/>
<line x1="222.16" y1="554.4" x2="222.16" y2="557.2" stroke="#3a3a3a" stroke-width="1.3"/>
<line x1="226.62" y1="554.4" x2="226.62" y2="557.2" stroke="#3a3a3a" stroke-width="1.3"/>
<line x1="231.09" y1="554.4" x2="231.09" y2="557.2" stroke="#3a3a3a" stroke-width="1.3"/>
<line x1="235.55" y1="554.4" x2="235.55" y2="557.2" stroke="#3a3a3a" stroke-width="1.3"/>
<line x1="240.01" y1="554.4" x2="240.01" y2="559.6" stroke="#3a3a3a" stroke-width="1.3"/>
<line x1="244.47" y1="554.4" x2="244.47" y2="557.2" stroke="#3a3a3a" stroke-width="1.3"/>
<line x1="248.94" y1="554.4" x2="248.94" y2="557.2" stroke="#3a3a3a" stroke-width="1.3"/>
<line x1="253.40" y1="554.4" x2="253.40" y2="557.2" stroke="#3a3a3a" stroke-width="1.3"/>
<line x1="257.86" y1="554.4" x2="257.86" y2="557.2" stroke="#3a3a3a" stroke-width="1.3"/>
<line x1="262.32" y1="554.4" x2="262.32" y2="563.8" stroke="#3a3a3a" stroke-width="1.3"/>
<line x1="266.79" y1="554.4" x2="266.79" y2="557.2" stroke="#3a3a3a" stroke-width="1.3"/>
<line x1="271.25" y1="554.4" x2="271.25" y2="557.2" stroke="#3a3a3a" stroke-width="1.3"/>
<line x1="275.71" y1="554.4" x2="275.71" y2="557.2" stroke="#3a3a3a" stroke-width="1.3"/>
<line x1="280.18" y1="554.4" x2="280.18" y2="557.2" stroke="#3a3a3a" stroke-width="1.3"/>
<line x1="284.64" y1="554.4" x2="284.64" y2="559.6" stroke="#3a3a3a" stroke-width="1.3"/>
<line x1="289.10" y1="554.4" x2="289.10" y2="557.2" stroke="#3a3a3a" stroke-width="1.3"/>
<line x1="293.56" y1="554.4" x2="293.56" y2="557.2" stroke="#3a3a3a" stroke-width="1.3"/>
<line x1="298.02" y1="554.4" x2="298.02" y2="557.2" stroke="#3a3a3a" stroke-width="1.3"/>
<line x1="302.49" y1="554.4" x2="302.49" y2="557.2" stroke="#3a3a3a" stroke-width="1.3"/>
<line x1="306.95" y1="554.4" x2="306.95" y2="563.8" stroke="#3a3a3a" stroke-width="1.3"/>
<line x1="311.41" y1="554.4" x2="311.41" y2="557.2" stroke="#3a3a3a" stroke-width="1.3"/>
<line x1="315.88" y1="554.4" x2="315.88" y2="557.2" stroke="#3a3a3a" stroke-width="1.3"/>
<line x1="320.34" y1="554.4" x2="320.34" y2="557.2" stroke="#3a3a3a" stroke-width="1.3"/>
<line x1="324.80" y1="554.4" x2="324.80" y2="557.2" stroke="#3a3a3a" stroke-width="1.3"/>
<line x1="329.26" y1="554.4" x2="329.26" y2="559.6" stroke="#3a3a3a" stroke-width="1.3"/>
<line x1="333.72" y1="554.4" x2="333.72" y2="557.2" stroke="#3a3a3a" stroke-width="1.3"/>
<line x1="338.19" y1="554.4" x2="338.19" y2="557.2" stroke="#3a3a3a" stroke-width="1.3"/>
<line x1="342.65" y1="554.4" x2="342.65" y2="557.2" stroke="#3a3a3a" stroke-width="1.3"/>
<line x1="347.11" y1="554.4" x2="347.11" y2="557.2" stroke="#3a3a3a" stroke-width="1.3"/>
<line x1="351.57" y1="554.4" x2="351.57" y2="563.8" stroke="#3a3a3a" stroke-width="1.3"/>
<line x1="356.04" y1="554.4" x2="356.04" y2="557.2" stroke="#3a3a3a" stroke-width="1.3"/>
<line x1="360.50" y1="554.4" x2="360.50" y2="557.2" stroke="#3a3a3a" stroke-width="1.3"/>
<line x1="364.96" y1="554.4" x2="364.96" y2="557.2" stroke="#3a3a3a" stroke-width="1.3"/>
<line x1="369.42" y1="554.4" x2="369.42" y2="557.2" stroke="#3a3a3a" stroke-width="1.3"/>
<line x1="373.89" y1="554.4" x2="373.89" y2="559.6" stroke="#3a3a3a" stroke-width="1.3"/>
<line x1="378.35" y1="554.4" x2="378.35" y2="557.2" stroke="#3a3a3a" stroke-width="1.3"/>
<line x1="382.81" y1="554.4" x2="382.81" y2="557.2" stroke="#3a3a3a" stroke-width="1.3"/>
<line x1="387.27" y1="554.4" x2="387.27" y2="557.2" stroke="#3a3a3a" stroke-width="1.3"/>
<line x1="391.74" y1="554.4" x2="391.74" y2="557.2" stroke="#3a3a3a" stroke-width="1.3"/>
<line x1="396.20" y1="554.4" x2="396.20" y2="563.8" stroke="#3a3a3a" stroke-width="1.3"/>
<line x1="400.66" y1="554.4" x2="400.66" y2="557.2" stroke="#3a3a3a" stroke-width="1.3"/>
<line x1="405.12" y1="554.4" x2="405.12" y2="557.2" stroke="#3a3a3a" stroke-width="1.3"/>
<line x1="409.59" y1="554.4" x2="409.59" y2="557.2" stroke="#3a3a3a" stroke-width="1.3"/>
<line x1="414.05" y1="554.4" x2="414.05" y2="557.2" stroke="#3a3a3a" stroke-width="1.3"/>
<line x1="418.51" y1="554.4" x2="418.51" y2="559.6" stroke="#3a3a3a" stroke-width="1.3"/>
<line x1="422.97" y1="554.4" x2="422.97" y2="557.2" stroke="#3a3a3a" stroke-width="1.3"/>
<line x1="427.44" y1="554.4" x2="427.44" y2="557.2" stroke="#3a3a3a" stroke-width="1.3"/>
<line x1="431.90" y1="554.4" x2="431.90" y2="557.2" stroke="#3a3a3a" stroke-width="1.3"/>
<line x1="436.36" y1="554.4" x2="436.36" y2="557.2" stroke="#3a3a3a" stroke-width="1.3"/>
<line x1="440.82" y1="554.4" x2="440.82" y2="563.8" stroke="#3a3a3a" stroke-width="1.3"/>
<line x1="445.29" y1="554.4" x2="445.29" y2="557.2" stroke="#3a3a3a" stroke-width="1.3"/>
<line x1="449.75" y1="554.4" x2="449.75" y2="557.2" stroke="#3a3a3a" stroke-width="1.3"/>
<line x1="454.21" y1="554.4" x2="454.21" y2="557.2" stroke="#3a3a3a" stroke-width="1.3"/>
<line x1="458.67" y1="554.4" x2="458.67" y2="557.2" stroke="#3a3a3a" stroke-width="1.3"/>
<line x1="463.14" y1="554.4" x2="463.14" y2="559.6" stroke="#3a3a3a" stroke-width="1.3"/>
<line x1="467.60" y1="554.4" x2="467.60" y2="557.2" stroke="#3a3a3a" stroke-width="1.3"/>
<line x1="472.06" y1="554.4" x2="472.06" y2="557.2" stroke="#3a3a3a" stroke-width="1.3"/>
<line x1="476.52" y1="554.4" x2="476.52" y2="557.2" stroke="#3a3a3a" stroke-width="1.3"/>
<line x1="480.99" y1="554.4" x2="480.99" y2="557.2" stroke="#3a3a3a" stroke-width="1.3"/>
<line x1="485.45" y1="554.4" x2="485.45" y2="563.8" stroke="#3a3a3a" stroke-width="1.3"/>
<line x1="489.91" y1="554.4" x2="489.91" y2="557.2" stroke="#3a3a3a" stroke-width="1.3"/>
<line x1="494.37" y1="554.4" x2="494.37" y2="557.2" stroke="#3a3a3a" stroke-width="1.3"/>
<line x1="498.84" y1="554.4" x2="498.84" y2="557.2" stroke="#3a3a3a" stroke-width="1.3"/>
<line x1="503.30" y1="554.4" x2="503.30" y2="557.2" stroke="#3a3a3a" stroke-width="1.3"/>
<line x1="507.76" y1="554.4" x2="507.76" y2="559.6" stroke="#3a3a3a" stroke-width="1.3"/>
<line x1="512.23" y1="554.4" x2="512.23" y2="557.2" stroke="#3a3a3a" stroke-width="1.3"/>
<line x1="516.69" y1="554.4" x2="516.69" y2="557.2" stroke="#3a3a3a" stroke-width="1.3"/>
<line x1="521.15" y1="554.4" x2="521.15" y2="557.2" stroke="#3a3a3a" stroke-width="1.3"/>
<line x1="525.61" y1="554.4" x2="525.61" y2="557.2" stroke="#3a3a3a" stroke-width="1.3"/>
<line x1="530.08" y1="554.4" x2="530.08" y2="563.8" stroke="#3a3a3a" stroke-width="1.3"/>
<line x1="534.54" y1="554.4" x2="534.54" y2="557.2" stroke="#3a3a3a" stroke-width="1.3"/>
<line x1="539.00" y1="554.4" x2="539.00" y2="557.2" stroke="#3a3a3a" stroke-width="1.3"/>
<line x1="543.46" y1="554.4" x2="543.46" y2="557.2" stroke="#3a3a3a" stroke-width="1.3"/>
<line x1="547.92" y1="554.4" x2="547.92" y2="557.2" stroke="#3a3a3a" stroke-width="1.3"/>
<line x1="552.39" y1="554.4" x2="552.39" y2="559.6" stroke="#3a3a3a" stroke-width="1.3"/>
<line x1="556.85" y1="554.4" x2="556.85" y2="557.2" stroke="#3a3a3a" stroke-width="1.3"/>
<line x1="561.31" y1="554.4" x2="561.31" y2="557.2" stroke="#3a3a3a" stroke-width="1.3"/>
<line x1="565.77" y1="554.4" x2="565.77" y2="557.2" stroke="#3a3a3a" stroke-width="1.3"/>
<line x1="570.24" y1="554.4" x2="570.24" y2="557.2" stroke="#3a3a3a" stroke-width="1.3"/>
<line x1="574.70" y1="554.4" x2="574.70" y2="563.8" stroke="#3a3a3a" stroke-width="1.3"/>
<line x1="579.16" y1="554.4" x2="579.16" y2="557.2" stroke="#3a3a3a" stroke-width="1.3"/>
<line x1="583.62" y1="554.4" x2="583.62" y2="557.2" stroke="#3a3a3a" stroke-width="1.3"/>
<line x1="588.09" y1="554.4" x2="588.09" y2="557.2" stroke="#3a3a3a" stroke-width="1.3"/>
<line x1="592.55" y1="554.4" x2="592.55" y2="557.2" stroke="#3a3a3a" stroke-width="1.3"/>
<line x1="597.01" y1="554.4" x2="597.01" y2="559.6" stroke="#3a3a3a" stroke-width="1.3"/>
<line x1="601.48" y1="554.4" x2="601.48" y2="557.2" stroke="#3a3a3a" stroke-width="1.3"/>
<line x1="605.94" y1="554.4" x2="605.94" y2="557.2" stroke="#3a3a3a" stroke-width="1.3"/>
<line x1="610.40" y1="554.4" x2="610.40" y2="557.2" stroke="#3a3a3a" stroke-width="1.3"/>
<line x1="614.86" y1="554.4" x2="614.86" y2="557.2" stroke="#3a3a3a" stroke-width="1.3"/>
<line x1="619.33" y1="554.4" x2="619.33" y2="563.8" stroke="#3a3a3a" stroke-width="1.3"/>
<line x1="623.79" y1="554.4" x2="623.79" y2="557.2" stroke="#3a3a3a" stroke-width="1.3"/>
<line x1="628.25" y1="554.4" x2="628.25" y2="557.2" stroke="#3a3a3a" stroke-width="1.3"/>
<line x1="632.71" y1="554.4" x2="632.71" y2="557.2" stroke="#3a3a3a" stroke-width="1.3"/>
<line x1="637.18" y1="554.4" x2="637.18" y2="557.2" stroke="#3a3a3a" stroke-width="1.3"/>
<line x1="641.64" y1="554.4" x2="641.64" y2="559.6" stroke="#3a3a3a" stroke-width="1.3"/>
<line x1="646.10" y1="554.4" x2="646.10" y2="557.2" stroke="#3a3a3a" stroke-width="1.3"/>
<line x1="650.56" y1="554.4" x2="650.56" y2="557.2" stroke="#3a3a3a" stroke-width="1.3"/>
<line x1="655.02" y1="554.4" x2="655.02" y2="557.2" stroke="#3a3a3a" stroke-width="1.3"/>
<line x1="659.49" y1="554.4" x2="659.49" y2="557.2" stroke="#3a3a3a" stroke-width="1.3"/>
<line x1="663.95" y1="554.4" x2="663.95" y2="563.8" stroke="#3a3a3a" stroke-width="1.3"/>
<line x1="668.41" y1="554.4" x2="668.41" y2="557.2" stroke="#3a3a3a" stroke-width="1.3"/>
<line x1="672.88" y1="554.4" x2="672.88" y2="557.2" stroke="#3a3a3a" stroke-width="1.3"/>
<line x1="677.34" y1="554.4" x2="677.34" y2="557.2" stroke="#3a3a3a" stroke-width="1.3"/>
<line x1="681.80" y1="554.4" x2="681.80" y2="557.2" stroke="#3a3a3a" stroke-width="1.3"/>
<line x1="686.26" y1="554.4" x2="686.26" y2="559.6" stroke="#3a3a3a" stroke-width="1.3"/>
<line x1="690.73" y1="554.4" x2="690.73" y2="557.2" stroke="#3a3a3a" stroke-width="1.3"/>
<line x1="695.19" y1="554.4" x2="695.19" y2="557.2" stroke="#3a3a3a" stroke-width="1.3"/>
<line x1="699.65" y1="554.4" x2="699.65" y2="557.2" stroke="#3a3a3a" stroke-width="1.3"/>
<line x1="704.11" y1="554.4" x2="704.11" y2="557.2" stroke="#3a3a3a" stroke-width="1.3"/>
<line x1="708.58" y1="554.4" x2="708.58" y2="563.8" stroke="#3a3a3a" stroke-width="1.3"/>
<line x1="713.04" y1="554.4" x2="713.04" y2="557.2" stroke="#3a3a3a" stroke-width="1.3"/>
<line x1="717.50" y1="554.4" x2="717.50" y2="557.2" stroke="#3a3a3a" stroke-width="1.3"/>
<line x1="721.96" y1="554.4" x2="721.96" y2="557.2" stroke="#3a3a3a" stroke-width="1.3"/>
<line x1="726.43" y1="554.4" x2="726.43" y2="557.2" stroke="#3a3a3a" stroke-width="1.3"/>
<line x1="730.89" y1="554.4" x2="730.89" y2="559.6" stroke="#3a3a3a" stroke-width="1.3"/>
<line x1="735.35" y1="554.4" x2="735.35" y2="557.2" stroke="#3a3a3a" stroke-width="1.3"/>
<line x1="739.81" y1="554.4" x2="739.81" y2="557.2" stroke="#3a3a3a" stroke-width="1.3"/>
<line x1="744.27" y1="554.4" x2="744.27" y2="557.2" stroke="#3a3a3a" stroke-width="1.3"/>
<line x1="748.74" y1="554.4" x2="748.74" y2="557.2" stroke="#3a3a3a" stroke-width="1.3"/>
<line x1="753.20" y1="554.4" x2="753.20" y2="563.8" stroke="#3a3a3a" stroke-width="1.3"/>
<line x1="757.66" y1="554.4" x2="757.66" y2="557.2" stroke="#3a3a3a" stroke-width="1.3"/>
<line x1="762.12" y1="554.4" x2="762.12" y2="557.2" stroke="#3a3a3a" stroke-width="1.3"/>
<line x1="766.59" y1="554.4" x2="766.59" y2="557.2" stroke="#3a3a3a" stroke-width="1.3"/>
<line x1="771.05" y1="554.4" x2="771.05" y2="557.2" stroke="#3a3a3a" stroke-width="1.3"/>
<line x1="775.51" y1="554.4" x2="775.51" y2="559.6" stroke="#3a3a3a" stroke-width="1.3"/>
<line x1="779.98" y1="554.4" x2="779.98" y2="557.2" stroke="#3a3a3a" stroke-width="1.3"/>
<line x1="784.44" y1="554.4" x2="784.44" y2="557.2" stroke="#3a3a3a" stroke-width="1.3"/>
<line x1="788.90" y1="554.4" x2="788.90" y2="557.2" stroke="#3a3a3a" stroke-width="1.3"/>
<line x1="793.36" y1="554.4" x2="793.36" y2="557.2" stroke="#3a3a3a" stroke-width="1.3"/>
<line x1="797.83" y1="554.4" x2="797.83" y2="563.8" stroke="#3a3a3a" stroke-width="1.3"/>
<line x1="802.29" y1="554.4" x2="802.29" y2="557.2" stroke="#3a3a3a" stroke-width="1.3"/>
<line x1="806.75" y1="554.4" x2="806.75" y2="557.2" stroke="#3a3a3a" stroke-width="1.3"/>
<line x1="811.21" y1="554.4" x2="811.21" y2="557.2" stroke="#3a3a3a" stroke-width="1.3"/>
<line x1="815.67" y1="554.4" x2="815.67" y2="557.2" stroke="#3a3a3a" stroke-width="1.3"/>
<line x1="820.14" y1="554.4" x2="820.14" y2="559.6" stroke="#3a3a3a" stroke-width="1.3"/>
<line x1="824.60" y1="554.4" x2="824.60" y2="557.2" stroke="#3a3a3a" stroke-width="1.3"/>
<line x1="829.06" y1="554.4" x2="829.06" y2="557.2" stroke="#3a3a3a" stroke-width="1.3"/>
<line x1="833.52" y1="554.4" x2="833.52" y2="557.2" stroke="#3a3a3a" stroke-width="1.3"/>
<line x1="837.99" y1="554.4" x2="837.99" y2="557.2" stroke="#3a3a3a" stroke-width="1.3"/>
<line x1="842.45" y1="554.4" x2="842.45" y2="563.8" stroke="#3a3a3a" stroke-width="1.3"/>
<line x1="846.91" y1="554.4" x2="846.91" y2="557.2" stroke="#3a3a3a" stroke-width="1.3"/>
<line x1="851.38" y1="554.4" x2="851.38" y2="557.2" stroke="#3a3a3a" stroke-width="1.3"/>
<line x1="855.84" y1="554.4" x2="855.84" y2="557.2" stroke="#3a3a3a" stroke-width="1.3"/>
<line x1="860.30" y1="554.4" x2="860.30" y2="557.2" stroke="#3a3a3a" stroke-width="1.3"/>
<line x1="864.76" y1="554.4" x2="864.76" y2="559.6" stroke="#3a3a3a" stroke-width="1.3"/>
<line x1="869.23" y1="554.4" x2="869.23" y2="557.2" stroke="#3a3a3a" stroke-width="1.3"/>
<line x1="873.69" y1="554.4" x2="873.69" y2="557.2" stroke="#3a3a3a" stroke-width="1.3"/>
<text x="39.20" y="573.2" font-size="8.8" fill="#2a2a2a" text-anchor="middle">0</text>
<text x="83.83" y="573.2" font-size="8.8" fill="#2a2a2a" text-anchor="middle">50</text>
<text x="128.45" y="573.2" font-size="8.8" fill="#2a2a2a" text-anchor="middle">100</text>
<text x="173.07" y="573.2" font-size="8.8" fill="#2a2a2a" text-anchor="middle">150</text>
<text x="217.70" y="573.2" font-size="8.8" fill="#2a2a2a" text-anchor="middle">200</text>
<text x="262.32" y="573.2" font-size="8.8" fill="#2a2a2a" text-anchor="middle">250</text>
<text x="306.95" y="573.2" font-size="8.8" fill="#2a2a2a" text-anchor="middle">300</text>
<text x="351.57" y="573.2" font-size="8.8" fill="#2a2a2a" text-anchor="middle">350</text>
<text x="396.20" y="573.2" font-size="8.8" fill="#2a2a2a" text-anchor="middle">400</text>
<text x="440.82" y="573.2" font-size="8.8" fill="#2a2a2a" text-anchor="middle">450</text>
<text x="485.45" y="573.2" font-size="8.8" fill="#2a2a2a" text-anchor="middle">500</text>
<text x="530.08" y="573.2" font-size="8.8" fill="#2a2a2a" text-anchor="middle">550</text>
<text x="574.70" y="573.2" font-size="8.8" fill="#2a2a2a" text-anchor="middle">600</text>
<text x="619.33" y="573.2" font-size="8.8" fill="#2a2a2a" text-anchor="middle">650</text>
<text x="663.95" y="573.2" font-size="8.8" fill="#2a2a2a" text-anchor="middle">700</text>
<text x="708.58" y="573.2" font-size="8.8" fill="#2a2a2a" text-anchor="middle">750</text>
<text x="753.20" y="573.2" font-size="8.8" fill="#2a2a2a" text-anchor="middle">800</text>
<text x="797.83" y="573.2" font-size="8.8" fill="#2a2a2a" text-anchor="middle">850</text>
<text x="842.45" y="573.2" font-size="8.8" fill="#2a2a2a" text-anchor="middle">900</text>
<text transform="translate(20.6 520.70) rotate(-90)" font-size="8.8" fill="#2a2a2a" text-anchor="middle">0</text>
<text transform="translate(20.6 481.80) rotate(-90)" font-size="8.8" fill="#2a2a2a" text-anchor="middle">50</text>
<rect x="12.0" y="440.6" width="14.5" height="15.8" rx="3" fill="#f4f4f4" stroke="#3a3a3a" stroke-width="1"/>
<text transform="translate(21.4 448.7) rotate(-90)" font-size="8.8" fill="#2a2a2a" text-anchor="middle">mm</text>
<rect x="861.4" y="558.6" width="15.4" height="14.8" rx="3" fill="#f4f4f4" stroke="#3a3a3a" stroke-width="1"/>
<text x="869.1" y="569.2" font-size="8.8" fill="#2a2a2a" text-anchor="middle">mm</text>
<text x="756.4" y="452.1" font-size="9.7" fill="#2a2a2a" textLength="117.3" lengthAdjust="spacing">R(504.103655,24.891643)</text>
<rect x="39.20" y="502.4" width="139.23" height="18.30" fill="#80baf1"/>
<rect x="39.20" y="520.7" width="139.23" height="17.70" fill="#c3dff9"/>
<rect x="39.20" y="502.4" width="139.23" height="36.00" fill="none" stroke="#3f77a3" stroke-width="1"/>
<rect x="178.43" y="507.4" width="89.25" height="13.30" fill="#80baf1"/>
<rect x="178.43" y="520.7" width="89.25" height="12.90" fill="#c3dff9"/>
<rect x="178.43" y="507.4" width="89.25" height="26.20" fill="none" stroke="#3f77a3" stroke-width="1"/>
<rect x="267.68" y="510.6" width="294.53" height="10.10" fill="#80baf1"/>
<rect x="267.68" y="520.7" width="294.53" height="9.40" fill="#c3dff9"/>
<rect x="267.68" y="510.6" width="294.53" height="19.50" fill="none" stroke="#3f77a3" stroke-width="1"/>
<rect x="562.21" y="476.5" width="89.25" height="5.30" fill="#80baf1"/>
<rect x="562.21" y="481.8" width="89.25" height="5.40" fill="#c3dff9"/>
<rect x="562.21" y="476.5" width="89.25" height="10.70" fill="none" stroke="#3f77a3" stroke-width="1"/>
<rect x="651.46" y="517.5" width="89.25" height="3.20" fill="#80baf1"/>
<rect x="651.46" y="520.7" width="89.25" height="2.90" fill="#c3dff9"/>
<rect x="651.46" y="517.5" width="89.25" height="6.10" fill="none" stroke="#3f77a3" stroke-width="1"/>
<rect x="740.71" y="517.1" width="89.25" height="3.60" fill="#80baf1"/>
<rect x="740.71" y="520.7" width="89.25" height="3.20" fill="#c3dff9"/>
<rect x="740.71" y="517.1" width="89.25" height="6.80" fill="none" stroke="#3f77a3" stroke-width="1"/>
<line x1="85.61" y1="502.4" x2="85.61" y2="538.4" stroke="#2f6a8c" stroke-width="1.2"/>
<line x1="132.02" y1="502.4" x2="132.02" y2="538.4" stroke="#2f6a8c" stroke-width="1.2"/>
<line x1="39.20" y1="483.1" x2="39.20" y2="520.7" stroke="#326f90" stroke-width="1.4"/>
<circle cx="39.20" cy="481.5" r="1.7" fill="#a9cfe6" stroke="#326f90" stroke-width="1"/>
<line x1="85.61" y1="483.1" x2="85.61" y2="520.7" stroke="#326f90" stroke-width="1.4"/>
<circle cx="85.61" cy="481.5" r="1.7" fill="#a9cfe6" stroke="#326f90" stroke-width="1"/>
<line x1="132.02" y1="483.1" x2="132.02" y2="520.7" stroke="#326f90" stroke-width="1.4"/>
<circle cx="132.02" cy="481.5" r="1.7" fill="#a9cfe6" stroke="#326f90" stroke-width="1"/>
<line x1="178.43" y1="487.8" x2="178.43" y2="520.7" stroke="#326f90" stroke-width="1.4"/>
<circle cx="178.43" cy="486.2" r="1.7" fill="#a9cfe6" stroke="#326f90" stroke-width="1"/>
<line x1="267.68" y1="491.8" x2="267.68" y2="520.7" stroke="#326f90" stroke-width="1.4"/>
<circle cx="267.68" cy="490.2" r="1.7" fill="#a9cfe6" stroke="#326f90" stroke-width="1"/>
<line x1="562.21" y1="457.40000000000003" x2="562.21" y2="520.7" stroke="#326f90" stroke-width="1.4"/>
<circle cx="562.21" cy="455.8" r="1.7" fill="#a9cfe6" stroke="#326f90" stroke-width="1"/>
<line x1="651.46" y1="457.40000000000003" x2="651.46" y2="481.8" stroke="#326f90" stroke-width="1.4"/>
<circle cx="651.46" cy="455.8" r="1.7" fill="#a9cfe6" stroke="#326f90" stroke-width="1"/>
<line x1="651.46" y1="498.3" x2="651.46" y2="520.7" stroke="#326f90" stroke-width="1.4"/>
<circle cx="651.46" cy="496.7" r="1.7" fill="#a9cfe6" stroke="#326f90" stroke-width="1"/>
<line x1="740.71" y1="497.6" x2="740.71" y2="520.7" stroke="#326f90" stroke-width="1.4"/>
<circle cx="740.71" cy="496" r="1.7" fill="#a9cfe6" stroke="#326f90" stroke-width="1"/>
<line x1="829.96" y1="497.6" x2="829.96" y2="520.7" stroke="#326f90" stroke-width="1.4"/>
<circle cx="829.96" cy="496" r="1.7" fill="#a9cfe6" stroke="#326f90" stroke-width="1"/>
<line x1="562.21" y1="487.4" x2="562.21" y2="519.4" stroke="#d4141c" stroke-width="1.8" stroke-dasharray="6.4 3.6"/>
<line x1="651.46" y1="487.4" x2="651.46" y2="519.4" stroke="#1c28e0" stroke-width="1.8" stroke-dasharray="5 6.8 16.6 10"/>
<line x1="39.20" y1="520.7" x2="562.21" y2="520.7" stroke="#1c1c1c" stroke-width="1.4" stroke-dasharray="3.2 2.5"/>
<line x1="562.21" y1="481.8" x2="651.46" y2="481.8" stroke="#1c1c1c" stroke-width="1.4" stroke-dasharray="3.2 2.5"/>
<line x1="651.46" y1="520.7" x2="829.96" y2="520.7" stroke="#1c1c1c" stroke-width="1.4" stroke-dasharray="3.2 2.5"/>
<line x1="829.96" y1="520.7" x2="866" y2="520.7" stroke="#777" stroke-width="0.9" stroke-dasharray="4 2 1.5 2"/>
<path d="M865.6 518.9 L869.2 520.7 L865.6 522.5 Z" fill="#555"/>
<text x="870.8" y="520.6" font-size="9.6" font-style="italic" fill="#555">Z</text>
<line x1="39.20" y1="489" x2="39.20" y2="520" stroke="#555" stroke-width="0.9" stroke-dasharray="2.5 2"/>
<path d="M37.40 490.6 L39.20 486.8 L41.00 490.6 Z" fill="#555"/>
<text x="39.50" y="481" font-size="8.8" fill="#333" text-anchor="middle">Y</text>
<circle cx="39.20" cy="520.7" r="2.3" fill="#d9676c"/>
<text x="38.90" y="520.60" font-size="8" font-style="italic" font-weight="bold" fill="#13335a">1</text>
<circle cx="85.61" cy="520.7" r="2.3" fill="#d9676c"/>
<text x="85.31" y="520.60" font-size="8" font-style="italic" font-weight="bold" fill="#13335a">2</text>
<circle cx="132.02" cy="520.7" r="2.3" fill="#d9676c"/>
<text x="131.72" y="520.60" font-size="8" font-style="italic" font-weight="bold" fill="#13335a">3</text>
<circle cx="178.43" cy="520.7" r="2.3" fill="#d9676c"/>
<text x="178.13" y="520.60" font-size="8" font-style="italic" font-weight="bold" fill="#13335a">4</text>
<circle cx="267.68" cy="520.7" r="2.3" fill="#d9676c"/>
<text x="267.38" y="520.60" font-size="8" font-style="italic" font-weight="bold" fill="#13335a">5</text>
<circle cx="562.21" cy="520.7" r="2.3" fill="#d9676c"/>
<text x="561.91" y="520.60" font-size="8" font-style="italic" font-weight="bold" fill="#13335a">6</text>
<circle cx="562.21" cy="481.8" r="2.3" fill="#d9676c"/>
<circle cx="651.46" cy="481.8" r="2.3" fill="#d9676c"/>
<text x="651.16" y="481.70" font-size="8" font-style="italic" font-weight="bold" fill="#13335a">2</text>
<circle cx="651.46" cy="520.7" r="2.3" fill="#d9676c"/>
<circle cx="740.71" cy="520.7" r="2.3" fill="#d9676c"/>
<text x="740.41" y="520.60" font-size="8" font-style="italic" font-weight="bold" fill="#13335a">3</text>
<circle cx="829.96" cy="520.7" r="2.3" fill="#d9676c"/>
<text x="829.66" y="520.60" font-size="8" font-style="italic" font-weight="bold" fill="#13335a">2</text>
</svg>
</body></html>
